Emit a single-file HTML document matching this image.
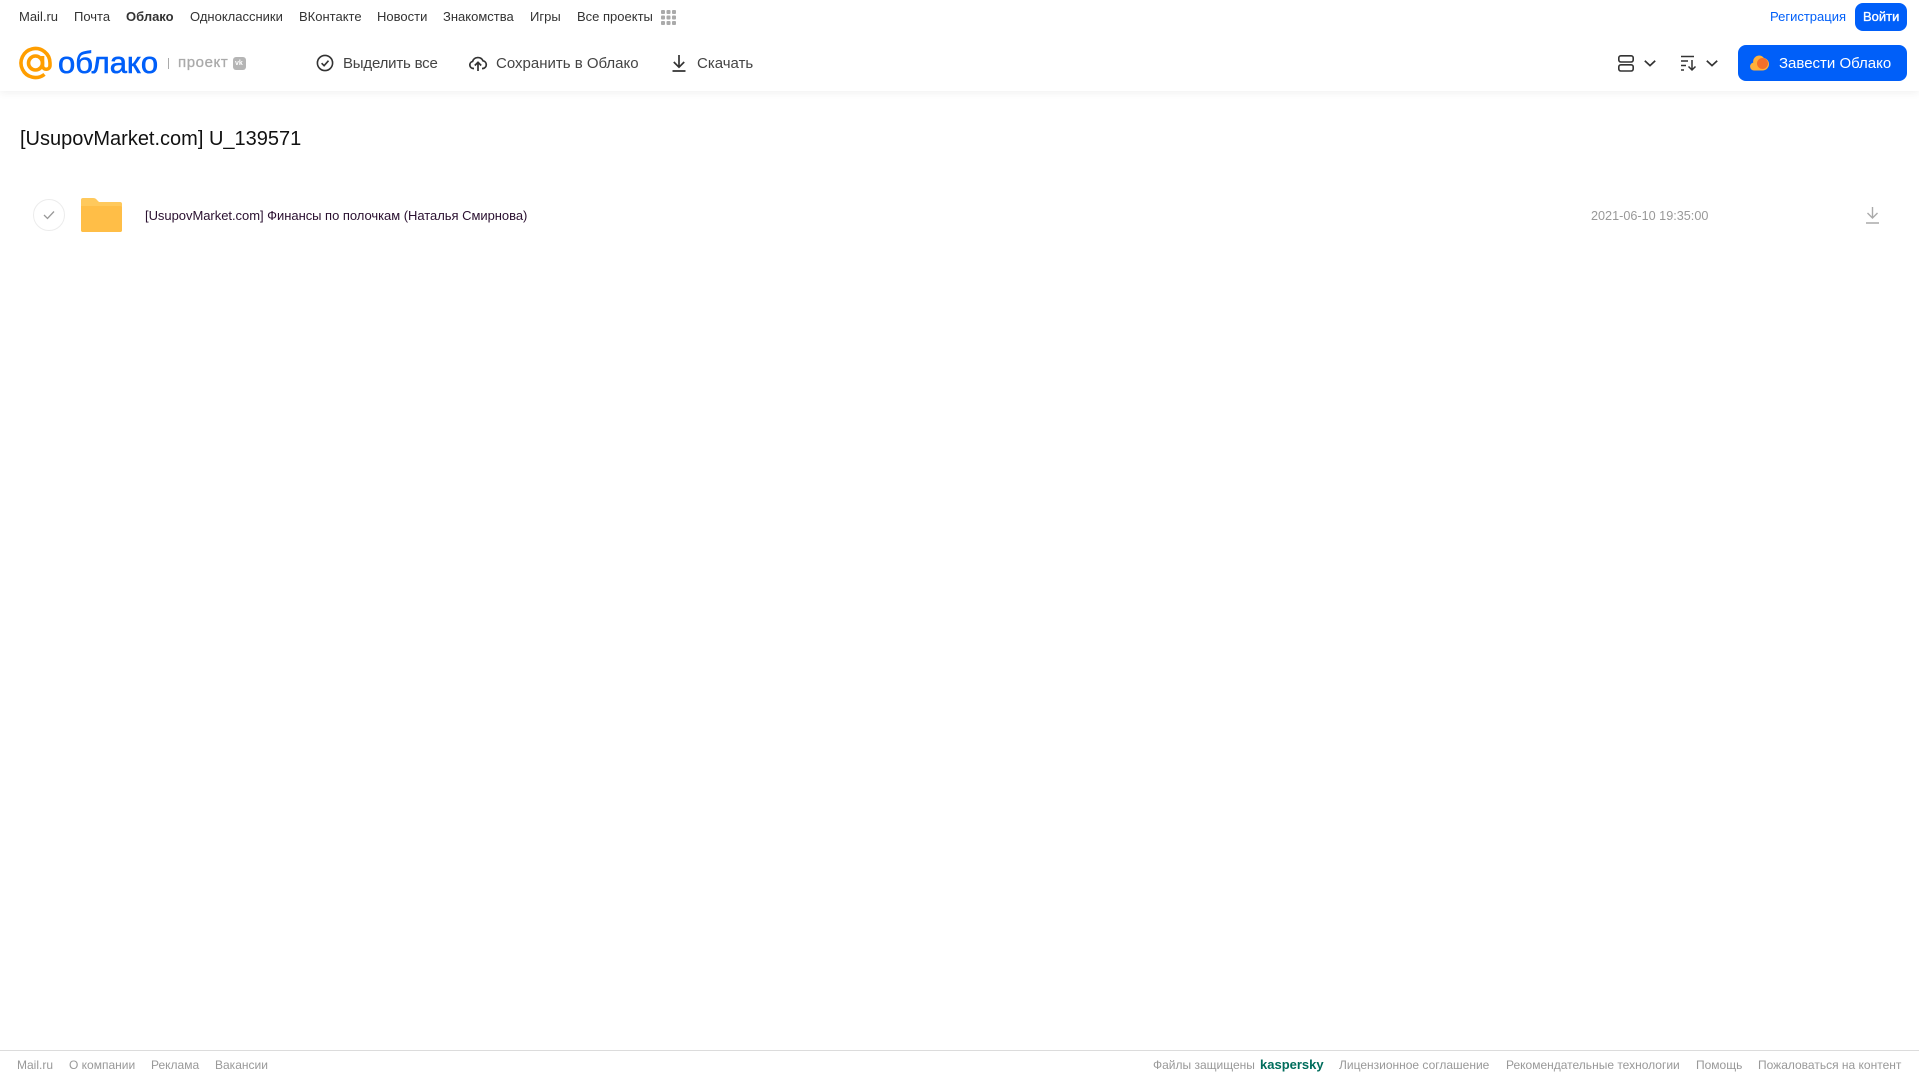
<!DOCTYPE html>
<html lang="ru"><head><meta charset="utf-8"><title>Облако</title>
<style>
html,body{margin:0;padding:0;background:#fff;width:1919px;height:1079px;overflow:hidden}
body{font-family:"Liberation Sans","Noto Sans CJK SC",sans-serif;position:relative}
.t{position:absolute;white-space:nowrap;line-height:20px}
.n{top:7px;font-size:13px;color:#333}
.b{top:54px;font-size:15px;color:#444}
.f{top:1055px;font-size:12px;color:#999}
svg{position:absolute;overflow:visible}
#hdr{position:absolute;left:0;top:0;width:1919px;height:91px;background:#fff;box-shadow:0 2px 8px rgba(0,0,0,.06)}
</style></head><body>
<div id="hdr"></div>
<span class="t n" style="left:19px">Mail.ru</span>
<span class="t n" style="left:74px">Почта</span>
<span class="t n" style="left:126px;font-weight:bold">Облако</span>
<span class="t n" style="left:190px">Одноклассники</span>
<span class="t n" style="left:299px">ВКонтакте</span>
<span class="t n" style="left:377px">Новости</span>
<span class="t n" style="left:443px">Знакомства</span>
<span class="t n" style="left:530px">Игры</span>
<span class="t n" style="left:577px">Все проекты</span>
<svg style="left:661px;top:10px" width="15" height="15" fill="#aaa"><rect width="4" height="4" rx="1"/><rect x="5.5" width="4" height="4" rx="1"/><rect x="11" width="4" height="4" rx="1"/><rect y="5.5" width="4" height="4" rx="1"/><rect x="5.5" y="5.5" width="4" height="4" rx="1"/><rect x="11" y="5.5" width="4" height="4" rx="1"/><rect y="11" width="4" height="4" rx="1"/><rect x="5.5" y="11" width="4" height="4" rx="1"/><rect x="11" y="11" width="4" height="4" rx="1"/></svg>
<span class="t n" style="left:1770px;color:#005ff9">Регистрация</span>
<div style="position:absolute;left:1855px;top:3px;width:52px;height:28px;border-radius:8px;background:#005ff9"></div>
<span class="t n" style="left:1863px;color:#fff;font-size:13px;-webkit-text-stroke:.35px #fff">Войти</span>

<svg style="left:0;top:0" width="60" height="90" fill="none" stroke="#ff9e00" stroke-width="3.6"><circle cx="35.5" cy="63" r="7"/><path d="M42.5 56v9.5a3.700 3.700 0 0 0 7.500 0V63a14.500 14.500 0 1 0-5.500 11.400"/></svg>
<span class="t" style="left:58px;top:45px;font-size:31px;line-height:36px;color:#005ff9;-webkit-text-stroke:.6px #005ff9">облако</span>
<div style="position:absolute;left:168px;top:58px;width:1px;height:11px;background:#aaa"></div>
<span class="t" style="left:178px;top:53px;font-size:15px;letter-spacing:.6px;color:#aaa;-webkit-text-stroke:.3px #aaa">проект</span>
<div style="position:absolute;left:233px;top:57px;width:13px;height:13px;border-radius:3px;background:#b5b5b5"></div>
<span class="t" style="left:235px;top:58px;font-size:7px;line-height:11px;color:#fff;font-weight:bold">vk</span>

<svg style="left:316px;top:54px" width="18" height="18" fill="none" stroke="#333" stroke-width="1.6"><circle cx="9" cy="9" r="7.6"/><path d="M5.6 9.2l2.500 2.500 4.400-5"/></svg>
<span class="t b" style="left:343px;letter-spacing:-.2px">Выделить все</span>
<svg style="left:469px;top:54px" width="18" height="18" fill="none" stroke="#333" stroke-width="1.7"><path d="M5 14.500H4.300A3.600 3.600 0 0 1 3.600 7.400 5.600 5.600 0 0 1 14 6.800a3.900 3.900 0 0 1 0 7.700h-1"/><path d="M9 17V8.500M5.800 11.500L9 8.300l3.200 3.200"/></svg>
<span class="t b" style="left:496px">Сохранить в Облако</span>
<svg style="left:671px;top:54px" width="16" height="18" fill="none" stroke="#333" stroke-width="1.7"><path d="M8 1v12M2.800 8L8 13.200 13.200 8M1.500 17h13"/></svg>
<span class="t b" style="left:697px">Скачать</span>

<svg style="left:1618px;top:55px" width="16" height="17" fill="none" stroke="#333" stroke-width="1.6"><rect x=".8" y=".8" width="14.400" height="6.200" rx="2"/><rect x=".8" y="9.800" width="14.400" height="6.200" rx="2"/></svg>
<svg style="left:1644px;top:60px" width="12" height="7" fill="none" stroke="#333" stroke-width="1.7"><path d="M.8.8L6 5.600 11.200.8"/></svg>
<svg style="left:1681px;top:55px" width="16" height="16" fill="none" stroke="#333" stroke-width="1.5"><path d="M0 1.500h13M0 6h7M0 10.500h5M0 15h3M11 5v10M7.500 11.500L11 15l3.500-3.500"/></svg>
<svg style="left:1706px;top:60px" width="12" height="7" fill="none" stroke="#333" stroke-width="1.7"><path d="M.8.8L6 5.600 11.200.8"/></svg>
<div style="position:absolute;left:1738px;top:45px;width:169px;height:36px;border-radius:8px;background:#005ff9"></div>
<svg style="left:1750px;top:54px" width="20" height="18"><path d="M4 16.500a4 4 0 0 1-.8-7.900A6.200 6.200 0 0 1 9 1.500c2 0 3.700.9 4.800 2.400A6.300 6.300 0 0 1 19 10a6.500 6.500 0 0 1-6.500 6.500z" fill="#ffb03a"/><circle cx="12.500" cy="9.500" r="5.500" fill="#f4702a"/></svg>
<span class="t" style="left:1779px;top:54px;font-size:15px;color:#fff">Завести Облако</span>

<span class="t" style="left:20px;top:127px;font-size:20px;line-height:24px;color:#111">[UsupovMarket.com] U_139571</span>
<div style="position:absolute;left:33px;top:199px;width:30px;height:30px;border:1px solid #ececec;border-radius:50%"></div>
<svg style="left:43px;top:210px" width="12" height="10" fill="none" stroke="#999" stroke-width="1.3"><path d="M1 5l3.500 3.500L11 1.500"/></svg>
<svg style="left:81px;top:198px" width="41" height="34"><path d="M2 0h10c2 0 3 .8 4 2l2 2h21a2 2 0 0 1 2 2v26a2 2 0 0 1-2 2H2a2 2 0 0 1-2-2V2a2 2 0 0 1 2-2z" fill="#ffc95c"/><path d="M0 8h39a2 2 0 0 1 2 2V32a2 2 0 0 1-2 2H2a2 2 0 0 1-2-2z" fill="#ffbe47"/></svg>
<span class="t" style="left:145px;top:206px;font-size:13px;letter-spacing:-.035px;color:#2a1030">[UsupovMarket.com] Финансы по полочкам (Наталья Смирнова)</span>
<span class="t" style="left:1591px;top:206px;font-size:12.650px;color:#999">2021-06-10 19:35:00</span>
<svg style="left:1866px;top:207px" width="13" height="17" fill="none" stroke="#aaa" stroke-width="1.4"><path d="M6.500 0v11M1.500 6l5 5 5-5M0 16h13"/></svg>

<div style="position:absolute;left:0;top:1050px;width:1919px;height:1px;background:#dcdcdc"></div>
<span class="t f" style="left:17px">Mail.ru</span>
<span class="t f" style="left:69px">О компании</span>
<span class="t f" style="left:151px">Реклама</span>
<span class="t f" style="left:215px">Вакансии</span>
<span class="t f" style="left:1153px">Файлы защищены</span>
<span class="t f" style="left:1260px;color:#006d5c;font-weight:bold;font-size:13px">kaspersky</span>
<span class="t f" style="left:1339px">Лицензионное соглашение</span>
<span class="t f" style="left:1506px">Рекомендательные технологии</span>
<span class="t f" style="left:1696px">Помощь</span>
<span class="t f" style="left:1758px">Пожаловаться на контент</span>
</body></html>
